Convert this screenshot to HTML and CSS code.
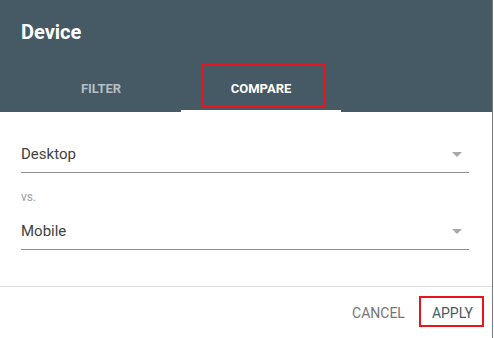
FILE: index.html
```html
<!DOCTYPE html>
<html lang="en">

<head>
    <meta charset="UTF-8">
    <meta name="viewport" content="width=device-width, initial-scale=1.0">
    <title>Device</title>
    <link rel="stylesheet" href="styles.css">
</head>

<body>
    <div class="dialog">
        <div class="dialog-header">
            <h1 class="dialog-title">Device</h1>
            <div class="tabs">
                <div class="tab">FILTER</div>
                <div class="tab tab-active">
                    COMPARE
                    <span class="highlight highlight-tab"></span>
                </div>
            </div>
        </div>

        <div class="dialog-body">
            <div class="select">
                <span class="select-value">Desktop</span>
                <span class="select-arrow"></span>
            </div>
            <p class="vs">vs.</p>
            <div class="select">
                <span class="select-value">Mobile</span>
                <span class="select-arrow"></span>
            </div>
        </div>

        <div class="dialog-footer">
            <button class="btn btn-cancel">CANCEL</button>
            <button class="btn btn-apply">APPLY</button>
        </div>
    </div>
</body>

</html>
```

FILE: styles.css
```css
body {
    margin: 0;
    background-color: white;
    font-family: 'Roboto', 'Liberation Sans', sans-serif;
}

.dialog {
    width: 492px;
    height: 338px;
    border-right: 1px solid #7a7a7a;
    display: flex;
    flex-direction: column;
}

.dialog-header {
    background-color: #455a64;
    padding: 20px 0 0 21px;
}

.dialog-title {
    margin: 0 0 20px 0;
    font-size: 20px;
    line-height: 24px;
    font-weight: 700;
    color: white;
}

.tabs {
    display: flex;
}

.tab {
    position: relative;
    width: 160px;
    height: 48px;
    line-height: 50px;
    text-align: center;
    font-size: 13px;
    font-weight: 700;
    color: #b4bec3;
    box-sizing: border-box;
}

.tab-active {
    color: white;
    border-bottom: 2px solid white;
}

/* red annotation boxes */
.highlight {
    position: absolute;
    border: 2px solid #e8151e;
    box-sizing: border-box;
}

.highlight-tab {
    left: 21px;
    top: 0;
    width: 124px;
    height: 43px;
}

.dialog-body {
    padding: 32px 0 0 21px;
    flex: 1;
    border-bottom: 1px solid #e0e0e0;
}

.select {
    width: 448px;
    display: flex;
    align-items: center;
    justify-content: space-between;
    padding-bottom: 8px;
    border-bottom: 1px solid #8e8e8e;
}

.select-value {
    font-size: 15px;
    line-height: 20px;
    color: #424242;
}

.select-arrow {
    width: 0;
    height: 0;
    margin-right: 7px;
    border-left: 5px solid transparent;
    border-right: 5px solid transparent;
    border-top: 5px solid #a8a8a8;
}

.vs {
    margin: 16px 0 16px 0;
    font-size: 12px;
    line-height: 16px;
    color: #9e9e9e;
}

.dialog-footer {
    display: flex;
    justify-content: flex-end;
    gap: 4px;
    padding: 9px 8px 11px 0;
}

.btn {
    background: none;
    border: 2px solid transparent;
    font-family: 'Roboto', 'Liberation Sans', sans-serif;
    font-size: 14px;
    line-height: 20px;
    cursor: pointer;
}

.btn-cancel {
    padding: 5px 8px 2px 11px;
    color: #757575;
}

.btn-apply {
    padding: 5px 9px 2px 11px;
    color: #455a64;
    border-color: #e8151e;
}
```
